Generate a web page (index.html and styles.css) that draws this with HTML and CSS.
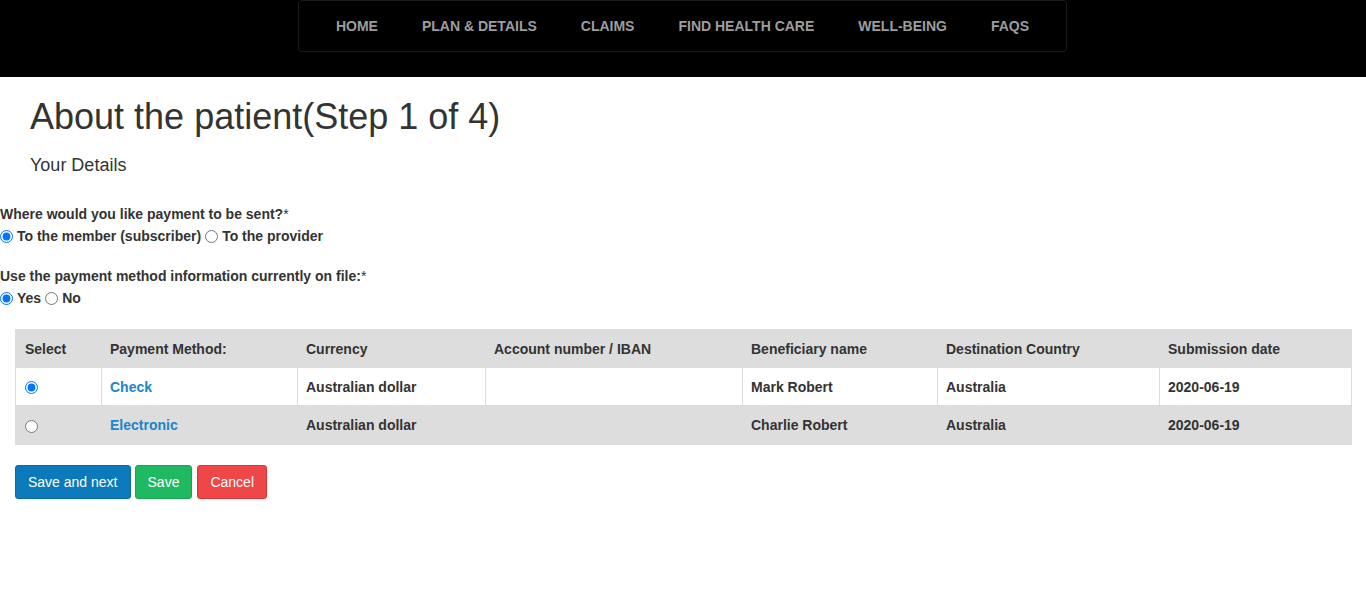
FILE: index.html
```html
<!DOCTYPE html>
<html lang="en">
<head>
<meta charset="utf-8">
<title>About the patient</title>
<link rel="stylesheet" href="styles.css">
</head>
<body>
<header class="topbar">
  <nav class="mainnav">
    <a href="#" class="navlink">Home</a>
    <a href="#" class="navlink">Plan &amp; Details</a>
    <a href="#" class="navlink">Claims</a>
    <a href="#" class="navlink">Find Health Care</a>
    <a href="#" class="navlink">Well-Being</a>
    <a href="#" class="navlink">FAQs</a>
  </nav>
</header>

<main class="page">
  <div class="intro">
    <h1 class="title">About the patient(Step 1 of 4)</h1>
    <h2 class="subtitle">Your Details</h2>
  </div>

  <form class="form">
    <div class="group">
      <div class="question">Where would you like payment to be sent?<span class="req">*</span></div>
      <div class="options">
        <label class="opt"><input type="radio" name="dest" checked>To the member (subscriber)</label>
        <label class="opt"><input type="radio" name="dest">To the provider</label>
      </div>
    </div>

    <div class="group">
      <div class="question">Use the payment method information currently on file:<span class="req">*</span></div>
      <div class="options">
        <label class="opt"><input type="radio" name="onfile" checked>Yes</label>
        <label class="opt"><input type="radio" name="onfile">No</label>
      </div>
    </div>

    <div class="tablewrap">
      <table class="methods">
        <colgroup>
          <col class="c1"><col class="c2"><col class="c3"><col class="c4"><col class="c5"><col class="c6"><col class="c7">
        </colgroup>
        <thead>
          <tr class="head">
            <th>Select</th>
            <th>Payment Method:</th>
            <th>Currency</th>
            <th>Account number / IBAN</th>
            <th>Beneficiary name</th>
            <th>Destination Country</th>
            <th>Submission date</th>
          </tr>
        </thead>
        <tbody>
          <tr class="row light">
            <td><input type="radio" name="method" class="rowradio" checked></td>
            <td><a href="#" class="methodlink">Check</a></td>
            <td>Australian dollar</td>
            <td></td>
            <td>Mark Robert</td>
            <td>Australia</td>
            <td>2020-06-19</td>
          </tr>
          <tr class="row shaded">
            <td><input type="radio" name="method" class="rowradio"></td>
            <td><a href="#" class="methodlink">Electronic</a></td>
            <td>Australian dollar</td>
            <td></td>
            <td>Charlie Robert</td>
            <td>Australia</td>
            <td>2020-06-19</td>
          </tr>
        </tbody>
      </table>
    </div>

    <div class="actions">
      <button type="button" class="btn btn-primary">Save and next</button>
      <button type="button" class="btn btn-success">Save</button>
      <button type="button" class="btn btn-danger">Cancel</button>
    </div>
  </form>
</main>
</body>
</html>
```

FILE: styles.css
```css
* { box-sizing: border-box; }

body {
  margin: 0;
  font-family: "Liberation Sans", Arial, Helvetica, sans-serif;
  font-size: 14px;
  color: #333;
  background: #fff;
}

/* Top bar */
.topbar {
  background: #000;
  height: 77px;
  display: flex;
  justify-content: center;
  align-items: flex-start;
}

.mainnav {
  display: flex;
  border: 1px solid #1b1b1b;
  border-radius: 4px;
  padding: 0 15px;
  margin-left: -1px;
}

.navlink {
  display: block;
  padding: 15px 22px;
  line-height: 20px;
  font-size: 14px;
  font-weight: bold;
  text-transform: uppercase;
  color: #9d9d9d;
  text-decoration: none;
}

/* Intro */
.intro {
  padding-left: 30px;
}

.title {
  margin: 20px 0 0;
  font-size: 36px;
  line-height: 40px;
  font-weight: normal;
  color: #333;
}

.subtitle {
  margin: 18px 0 0;
  font-size: 18px;
  line-height: 20px;
  font-weight: normal;
  color: #333;
}

/* Form */
.form {
  margin-top: 30px;
}

.group + .group {
  margin-top: 22px;
}

.question {
  font-weight: bold;
  line-height: 18px;
  height: 18px;
}

.req {
  font-weight: normal;
}

.options {
  display: flex;
  margin-top: 4px;
  height: 18px;
  align-items: center;
}

.opt {
  display: flex;
  align-items: center;
  font-weight: bold;
  line-height: 18px;
  margin-right: 4px;
}

.opt input {
  margin: 0 4px 0 0;
  width: 13px;
  height: 13px;
}

/* Table */
.tablewrap {
  margin-top: 22px;
  padding: 0 15px;
}

.methods {
  width: 100%;
  border-collapse: collapse;
  table-layout: fixed;
}

.c1 { width: 86px; }
.c2 { width: 196px; }
.c3 { width: 188px; }
.c4 { width: 257px; }
.c5 { width: 195px; }
.c6 { width: 222px; }
.c7 { width: 192px; }

.methods th,
.methods td {
  border: 1px solid #ddd;
  padding: 0 8px;
  text-align: left;
  vertical-align: middle;
  font-weight: bold;
  font-size: 14px;
  color: #333;
}

.methods th:first-child,
.methods td:first-child {
  padding-left: 9px;
}

.head {
  background: #ddd;
  height: 38px;
}

.row {
  height: 38px;
}

.row.shaded {
  background: #ddd;
  height: 39px;
}

.row.light {
  background: #fff;
}

.rowradio {
  margin: 0;
  width: 13px;
  height: 13px;
  vertical-align: middle;
}

.methodlink {
  color: #1a86c8;
  text-decoration: none;
}

/* Buttons */
.actions {
  display: flex;
  gap: 4px;
  margin: 20px 0 0 15px;
}

.btn {
  font-family: "Liberation Sans", Arial, Helvetica, sans-serif;
  font-size: 14px;
  line-height: 19px;
  padding: 7px 12px 6px;
  border-radius: 3px;
  border: 1px solid transparent;
  color: #fff;
  cursor: pointer;
}

.btn-primary {
  background: #0a7aba;
  border-color: #086ba4;
}

.btn-success {
  background: #1fb962;
  border-color: #19a554;
}

.btn-danger {
  background: #ef4747;
  border-color: #e03636;
  margin-left: 1px;
}
```
